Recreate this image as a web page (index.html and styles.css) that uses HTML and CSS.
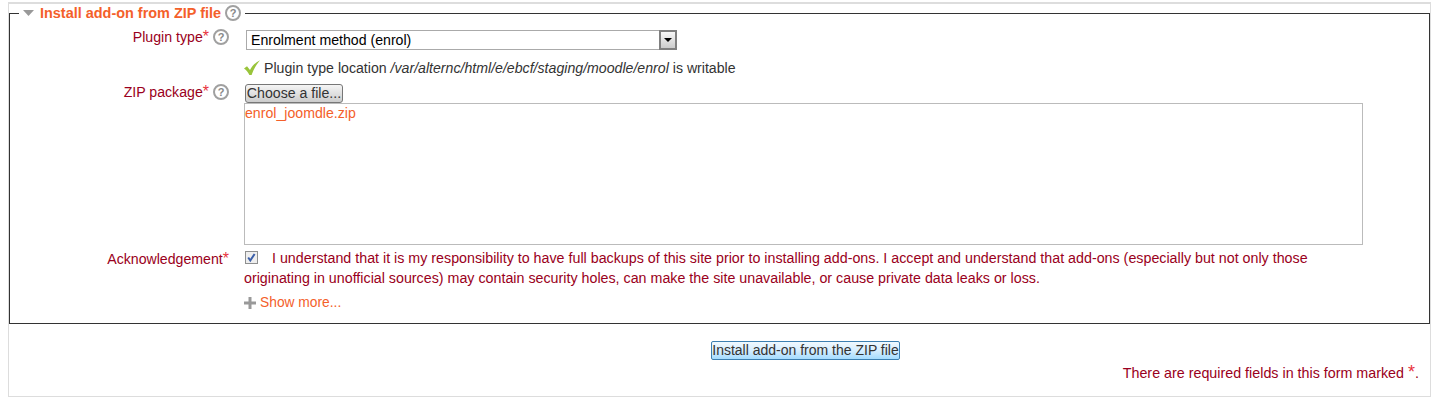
FILE: index.html
```html
<!DOCTYPE html>
<html lang="en">
<head>
<meta charset="utf-8">
<title>Install add-on from ZIP file</title>
<link rel="stylesheet" href="styles.css">
</head>
<body>
<form class="card">
  <fieldset class="box">
    <legend class="legend">
      <svg class="twisty" width="11" height="6" viewBox="0 0 11 6"><path d="M0 0H11L5.5 6Z" fill="#999"/></svg>
      <span class="legend-text">Install add-on from ZIP file</span>
      <span class="help">?</span>
    </legend>

    <div class="row row-type">
      <label class="label">Plugin type<span class="req">*</span></label>
      <span class="help-cell"><span class="help">?</span></span>
      <div class="field">
        <div class="select-wrap">
          <select class="select"><option>Enrolment method (enrol)</option></select>
          <span class="select-btn"><svg width="8" height="4" viewBox="0 0 8 4"><path d="M0 0H8L4 4Z" fill="#000"/></svg></span>
        </div>
      </div>
    </div>

    <div class="row row-loc">
      <span class="label"></span>
      <span class="help-cell"></span>
      <div class="field loc">
        <svg class="tick" width="16" height="15" viewBox="0 0 16 15"><path d="M0 8.5L3 6.3L6 10C8 6 11 2.8 16 0.2C12 5 9.4 9.5 7.6 15H5.4C4 12.2 2.3 10.2 0 8.5Z" fill="#99c43a"/></svg>
        <span>Plugin type location <em>/var/alternc/html/e/ebcf/staging/moodle/enrol</em> is writable</span>
      </div>
    </div>

    <div class="row row-zip">
      <label class="label">ZIP package<span class="req">*</span></label>
      <span class="help-cell"><span class="help">?</span></span>
      <div class="field zip">
        <button type="button" class="choose">Choose a file...</button>
        <div class="filebox"><a class="link" href="#">enrol_joomdle.zip</a></div>
      </div>
    </div>

    <div class="row row-ack">
      <label class="label label-wide">Acknowledgement<span class="req">*</span></label>
      <span class="help-cell help-cell-narrow"></span>
      <div class="field ack">
        <svg class="checkbox" width="13" height="13" viewBox="0 0 13 13"><rect x="0.5" y="0.5" width="12" height="12" fill="#eeeeee" stroke="#8e8f8f"/><path d="M3.2 6.5L5.3 9.5L9.6 3" fill="none" stroke="#3a5ea8" stroke-width="2"/></svg>
        I understand that it is my responsibility to have full backups of this site prior to installing add-ons. I accept and understand that add-ons (especially but not only those originating in unofficial sources) may contain security holes, can make the site unavailable, or cause private data leaks or loss.
      </div>
    </div>

    <div class="row row-more">
      <span class="label"></span>
      <span class="help-cell"></span>
      <div class="field more">
        <svg width="12" height="12" viewBox="0 0 12 12"><path d="M4.5 0H7.5V4.5H12V7.5H7.5V12H4.5V7.5H0V4.5H4.5Z" fill="#999"/></svg>
        <a class="link" href="#">Show more...</a>
      </div>
    </div>
  </fieldset>

  <div class="actions">
    <button type="button" class="install">Install add-on from the ZIP file</button>
  </div>
  <p class="note">There are required fields in this form marked <span class="req req-big">*</span>.</p>
</form>
</body>
</html>
```

FILE: styles.css
```css
html, body {
  margin: 0;
  padding: 0;
  background: #fff;
}

body {
  padding: 2px 7px 0 8px;
  font-family: "Liberation Sans", Arial, sans-serif;
  font-size: 14.15px;
  line-height: 19px;
  color: #333;
}

.card {
  height: 395px;
  box-sizing: border-box;
  border: 1px solid #ddd;
  border-top: 2px solid #ddd;
  display: block;
}

.box {
  margin: 0;
  padding: 0;
  height: 320px;
  box-sizing: border-box;
  border: 1px solid #333;
  min-width: 0;
}

.legend {
  margin-left: 9px;
  padding: 0 4px;
  display: flex;
  align-items: center;
  height: 18px;
}

.twisty {
  margin-right: 6px;
}

.legend-text {
  color: #f4602a;
  font-size: 14.45px;
  font-weight: bold;
  margin-right: 4px;
}

.help {
  display: inline-block;
  box-sizing: border-box;
  width: 16px;
  height: 16px;
  border: 2px solid #a0a0a0;
  border-radius: 50%;
  background: #fff;
  color: #888;
  font-size: 11px;
  font-weight: bold;
  line-height: 12px;
  text-align: center;
}

.row {
  display: flex;
  align-items: flex-start;
}

.label {
  flex: none;
  width: 199px;
  text-align: right;
  color: #9a0020;
}

.label-wide {
  width: 219px;
  padding-top: 1px;
}

.req {
  color: #e8323c;
  font-size: 16px;
}

.req-big {
  font-size: 18px;
  line-height: 14px;
}

.help-cell {
  flex: none;
  width: 35px;
  padding-left: 4px;
  box-sizing: border-box;
  height: 19px;
  display: flex;
  align-items: center;
}

.help-cell-narrow {
  width: 15px;
}

.field {
  flex: none;
  width: 1119px;
}

.row-type {
  margin-top: 5px;
}

.select-wrap {
  position: relative;
  margin-left: 2px;
  margin-top: 3px;
  width: 431px;
  height: 20px;
}

.select {
  appearance: none;
  display: block;
  width: 100%;
  height: 20px;
  box-sizing: border-box;
  border: 1px solid #aaa;
  border-radius: 0;
  background: #fff;
  padding: 0 0 0 4px;
  font: 14.15px "Liberation Sans", Arial, sans-serif;
  color: #000;
}

.select-btn {
  position: absolute;
  top: 0;
  right: 0;
  width: 18px;
  height: 20px;
  box-sizing: border-box;
  border: 2px solid #808080;
  background: linear-gradient(#f8f8f8, #ccc);
  display: flex;
  align-items: center;
  justify-content: center;
}

.row-loc {
  margin-top: 8px;
}

.loc {
  display: flex;
  align-items: center;
  gap: 4px;
  height: 21px;
}

.tick {
  flex: none;
  margin-top: -3px;
}

.row-zip {
  margin-top: 3px;
}

.zip {
  padding-top: 2px;
}

.choose {
  display: block;
  margin: 0 0 0 1px;
  padding: 0;
  width: 98px;
  height: 19px;
  box-sizing: border-box;
  border: 1px solid #777;
  border-radius: 3px;
  background: linear-gradient(#f5f5f5, #ccc);
  font: 14.15px/17px "Liberation Sans", Arial, sans-serif;
  color: #333;
}

.filebox {
  height: 142px;
  box-sizing: border-box;
  border: 1px solid #bbb;
  padding-left: 0;
  line-height: 19px;
}

.link {
  color: #f4602a;
  text-decoration: none;
}

.row-ack {
  margin-top: 3px;
}

.ack {
  color: #9a0020;
  font-size: 14.27px;
  line-height: 20px;
}

.checkbox {
  vertical-align: -1px;
  margin: 0 10px 0 1px;
}

.row-more {
  margin-top: 5px;
}

.more {
  display: flex;
  align-items: center;
  gap: 4px;
  font-size: 13.8px;
}

.actions {
  margin-top: 17px;
  padding-left: 702px;
}

.install {
  display: block;
  width: 189px;
  height: 19px;
  box-sizing: border-box;
  padding: 0;
  border: 1px solid #3c7fb1;
  border-radius: 2px;
  background: linear-gradient(#f0f9ff 0%, #d6eeff 50%, #a4dcff 100%);
  font: 14px/17px "Liberation Sans", Arial, sans-serif;
  color: #333;
}

.note {
  margin: 4px 11px 0 0;
  font-size: 14.3px;
  text-align: right;
  color: #9a0020;
}
```
